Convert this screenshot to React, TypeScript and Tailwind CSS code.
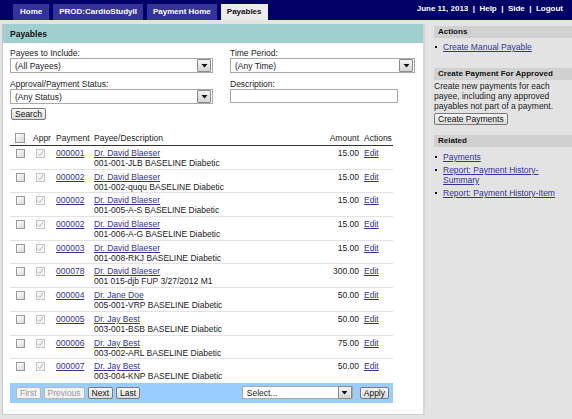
import React from "react";

const LINK = "text-[#333399] underline";

function Arrow() {
  return (
    <span className="flex h-[13px] w-[14px] items-center justify-center border border-[#8a8a8a] bg-gradient-to-b from-[#f4f4f4] to-[#d4d4d4] rounded-[1px]">
      <svg width="7" height="5" viewBox="0 0 7 5">
        <path d="M0.5 1 L6.5 1 L3.5 4.5 Z" fill="#111" />
      </svg>
    </span>
  );
}

function Select({ text, w }: { text: string; w: string }) {
  return (
    <div className={`${w} flex h-[15px] items-center justify-between border border-[#a9a9a9] bg-white pl-[4px] pr-[1px]`}>
      <span className="text-[#222]">{text}</span>
      <Arrow />
    </div>
  );
}

function Box() {
  return (
    <span className="block h-[9px] w-[9px] border border-[#9a9a9a] bg-gradient-to-br from-[#ffffff] to-[#d9d9d9]" />
  );
}

function CheckedBox() {
  return (
    <span className="flex h-[9px] w-[9px] items-center justify-center border border-[#c6c6c6] bg-[#f6f6f6]">
      <svg width="7" height="7" viewBox="0 0 7 7">
        <path d="M1 3.8 L2.8 5.6 L6 1" stroke="#b0b0b0" strokeWidth="1" fill="none" />
      </svg>
    </span>
  );
}

function Btn({ children, disabled }: { children: React.ReactNode; disabled?: boolean }) {
  return (
    <span
      className={`inline-flex h-[12px] items-center rounded-[2px] border px-[3px] ${
        disabled ? "border-[#b8b8b8] bg-[#f2f2f2] text-[#9a9a9a]" : "border-[#7a7a7a] bg-gradient-to-b from-[#f8f8f8] to-[#dcdcdc] text-[#111]"
      }`}
    >
      {children}
    </span>
  );
}

const rows = [
  ["000001", "Dr. David Blaeser", "001-001-JLB BASELINE Diabetic", "15.00"],
  ["000002", "Dr. David Blaeser", "001-002-ququ BASELINE Diabetic", "15.00"],
  ["000002", "Dr. David Blaeser", "001-005-A-S BASELINE Diabetic", "15.00"],
  ["000002", "Dr. David Blaeser", "001-006-A-G BASELINE Diabetic", "15.00"],
  ["000003", "Dr. David Blaeser", "001-008-RKJ BASELINE Diabetic", "15.00"],
  ["000078", "Dr. David Blaeser", "001 015-djb FUP 3/27/2012 M1", "300.00"],
  ["000004", "Dr. Jane Doe", "005-001-VRP BASELINE Diabetic", "50.00"],
  ["000005", "Dr. Jay Best", "003-001-BSB BASELINE Diabetic", "50.00"],
  ["000006", "Dr. Jay Best", "003-002-ARL BASELINE Diabetic", "75.00"],
  ["000007", "Dr. Jay Best", "003-004-KNP BASELINE Diabetic", "50.00"],
];

function SideHeader({ children }: { children: React.ReactNode }) {
  return (
    <div className="ml-[9px] flex h-[12px] items-center bg-[#d0d0d0] pl-[4px] text-[8px] font-bold text-[#111]">
      {children}
    </div>
  );
}

function Bullet({ children }: { children: React.ReactNode }) {
  return (
    <div className="flex items-start">
      <span className="mt-[4px] ml-[10px] mr-[6px] block h-[2px] w-[2px] shrink-0 bg-[#111]" />
      <span>{children}</span>
    </div>
  );
}

export default function App() {
  return (
    <div className="relative h-[419px] w-[572px] overflow-hidden bg-[#e3e3e3] font-['Liberation_Sans',Arial,sans-serif] text-[8.5px] leading-[10px] text-[#222]">
      {/* Top bar */}
      <div className="flex h-[20px] items-end justify-between bg-[#000066] pl-[13px] pr-[9px]">
        <div className="flex gap-[4px] text-[8px] font-bold">
          <span className="flex h-[16px] items-center bg-[#333399] px-[7px] text-white">Home</span>
          <span className="flex h-[16px] items-center bg-[#333399] px-[6px] text-white">PROD:CardioStudyII</span>
          <span className="flex h-[16px] items-center bg-[#333399] px-[6px] text-white">Payment Home</span>
          <span className="flex h-[16px] items-center bg-[#ececec] px-[6px] text-[#111]">Payables</span>
        </div>
        <div className="mb-[6px] text-[8px] font-bold text-white">
          June 11, 2013 &nbsp;|&nbsp; Help &nbsp;|&nbsp; Side &nbsp;|&nbsp; Logout
        </div>
      </div>

      <div className="flex pt-[4px]">
        {/* Main panel */}
        <div className="ml-[2px] h-[391px] w-[423px] border-l border-b border-r-2 border-l-[#c8c8c8] border-b-[#d0d0d0] border-r-[#d6d6d6] bg-white">
          <div className="flex h-[19px] items-center bg-[#9fcfcf] pl-[7px] text-[8.5px] font-bold text-[#111]">Payables</div>

          <div className="px-[7px]">
            <div className="mt-[6px] grid grid-cols-[203px_185px] gap-x-[17px]">
              <div>
                <div className="h-[9px] leading-[9px]">Payees to Include:</div>
                <Select text="(All Payees)" w="w-[203px]" />
              </div>
              <div>
                <div className="h-[9px] leading-[9px]">Time Period:</div>
                <Select text="(Any Time)" w="w-[185px]" />
              </div>
              <div className="mt-[7px]">
                <div className="h-[9px] leading-[9px]">Approval/Payment Status:</div>
                <Select text="(Any Status)" w="w-[203px]" />
              </div>
              <div className="mt-[7px]">
                <div className="h-[9px] leading-[9px]">Description:</div>
                <div className="h-[14px] w-[168px] border border-[#a9a9a9] bg-white" />
              </div>
            </div>

            <div className="mt-[4px] ml-[1px]">
              <Btn>Search</Btn>
            </div>

            {/* Table */}
            <div className="mt-[11px] w-[383px]">
              <div className="flex h-[15px] items-center border-b border-[#333]">
                <div className="flex w-[20px] justify-center">
                  <span className="block h-[10px] w-[10px] border border-[#9a9a9a] bg-gradient-to-br from-white to-[#d9d9d9]" />
                </div>
                <div className="w-[20px] pl-[3px]">Appr</div>
                <div className="w-[39px] pl-[6px]">Payment</div>
                <div className="flex-1 pl-[5px]">Payee/Description</div>
                <div className="w-[60px] text-right">Amount</div>
                <div className="w-[34px] pl-[5px]">Actions</div>
              </div>
              {rows.map((r, i) => (
                <div key={i} className={`flex h-[23.7px] pt-[2px] ${i < rows.length - 1 ? "border-b border-[#e2e2e2]" : ""}`}>
                  <div className="flex w-[20px] justify-center pt-[1px]">
                    <Box />
                  </div>
                  <div className="flex w-[20px] justify-center pt-[1px]">
                    <CheckedBox />
                  </div>
                  <div className="w-[39px] pl-[6px]">
                    <span className={LINK}>{r[0]}</span>
                  </div>
                  <div className="flex-1 pl-[5px]">
                    <div>
                      <span className={LINK}>{r[1]}</span>
                    </div>
                    <div>{r[2]}</div>
                  </div>
                  <div className="w-[60px] text-right">{r[3]}</div>
                  <div className="w-[34px] pl-[5px]">
                    <span className={LINK}>Edit</span>
                  </div>
                </div>
              ))}
              <div className="flex h-[20px] items-center justify-between bg-[#99ccff] pl-[6px] pr-[4px]">
                <div className="flex gap-[3px]">
                  <Btn disabled>First</Btn>
                  <Btn disabled>Previous</Btn>
                  <Btn>Next</Btn>
                  <Btn>Last</Btn>
                </div>
                <div className="flex items-center gap-[7px]">
                  <div className="flex h-[13px] w-[111px] items-center justify-between border border-[#a9a9a9] bg-white pl-[4px]">
                    <span>Select...</span>
                    <Arrow />
                  </div>
                  <Btn>Apply</Btn>
                </div>
              </div>
            </div>
          </div>
        </div>

        {/* Side panel */}
        <div className="flex-1 pt-[2px]">
          <SideHeader>Actions</SideHeader>
          <div className="mt-[4px]">
            <Bullet>
              <span className={LINK}>Create Manual Payable</span>
            </Bullet>
          </div>
          <div className="mt-[16px]">
            <SideHeader>Create Payment For Approved</SideHeader>
          </div>
          <div className="ml-[9px] mt-[1px] pr-[4px] leading-[10px]">
            Create new payments for each
            <br />
            payee, including any approved
            <br />
            payables not part of a payment.
          </div>
          <div className="ml-[9px] mt-[2px]">
            <Btn>Create Payments</Btn>
          </div>
          <div className="mt-[10px]">
            <SideHeader>Related</SideHeader>
          </div>
          <div className="mt-[5px] flex flex-col gap-[3px] leading-[10px]">
            <Bullet>
              <span className={LINK}>Payments</span>
            </Bullet>
            <Bullet>
              <span className={LINK}>Report: Payment History-</span>
              <br />
              <span className={LINK}>Summary</span>
            </Bullet>
            <Bullet>
              <span className={LINK}>Report: Payment History-Item</span>
            </Bullet>
          </div>
        </div>
      </div>
    </div>
  );
}
